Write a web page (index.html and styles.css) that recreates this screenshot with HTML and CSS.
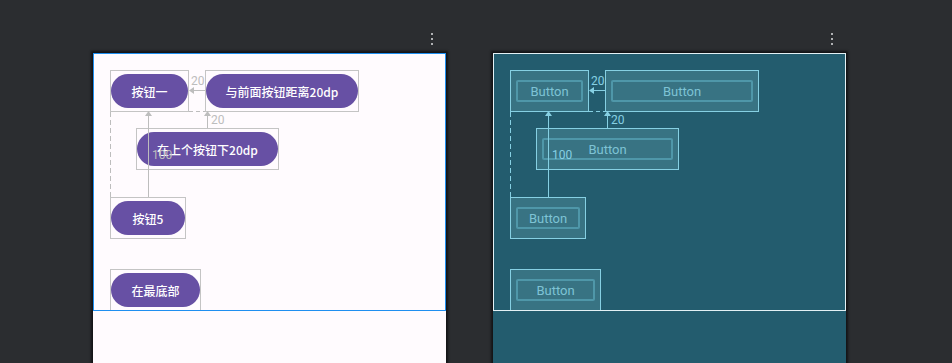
FILE: index.html
```html
<!DOCTYPE html>
<html lang="zh-CN">
<head>
  <meta charset="UTF-8">
  <meta name="viewport" content="width=device-width, initial-scale=1.0">
  <title>Layout Editor</title>
  <link rel="stylesheet" href="styles.css">
</head>
<body>

<div class="editor">

  <!-- design surface -->
  <div class="panel design">
    <div class="panel-bar">
      <div class="kebab"><span></span><span></span><span></span></div>
    </div>
    <div class="device">
      <div class="screen">
        <div class="widget w-first"><div class="pill">按钮一</div></div>
        <div class="widget w-second"><div class="pill">与前面按钮距离20dp</div></div>
        <div class="widget w-third"><div class="pill">在上个按钮下20dp</div></div>
        <div class="widget w-fifth"><div class="pill">按钮5</div></div>
        <div class="widget w-bottom"><div class="pill">在最底部</div></div>

        <svg class="links" width="351" height="256">
          <g class="link-lines">
            <line x1="97" y1="36.5" x2="111" y2="36.5"/>
            <line x1="95" y1="57.5" x2="111" y2="57.5" stroke-dasharray="4 3"/>
            <line x1="16.5" y1="58" x2="16.5" y2="143" stroke-dasharray="5 3"/>
            <line x1="54.5" y1="61" x2="54.5" y2="143"/>
            <line x1="113.5" y1="61" x2="113.5" y2="74"/>
          </g>
          <g class="link-heads">
            <polygon points="95,36.5 100,33 100,40"/>
            <polygon points="54.5,57 51,62 58,62"/>
            <polygon points="113.5,57 110,62 117,62"/>
          </g>
          <text x="97" y="31">20</text>
          <text x="117" y="70">20</text>
          <text x="58" y="105">100</text>
        </svg>
      </div>
    </div>
  </div>

  <!-- blueprint surface -->
  <div class="panel blueprint">
    <div class="panel-bar">
      <div class="kebab"><span></span><span></span><span></span></div>
    </div>
    <div class="device">
      <div class="screen">
        <div class="widget w-first"><div class="bp-btn">Button</div></div>
        <div class="widget w-second"><div class="bp-btn">Button</div></div>
        <div class="widget w-third"><div class="bp-btn">Button</div></div>
        <div class="widget w-fifth"><div class="bp-btn">Button</div></div>
        <div class="widget w-bottom"><div class="bp-btn">Button</div></div>

        <svg class="links" width="351" height="256">
          <g class="link-lines">
            <line x1="97" y1="36.5" x2="111" y2="36.5"/>
            <line x1="95" y1="57.5" x2="111" y2="57.5" stroke-dasharray="4 3"/>
            <line x1="16.5" y1="58" x2="16.5" y2="143" stroke-dasharray="5 3"/>
            <line x1="54.5" y1="61" x2="54.5" y2="143"/>
            <line x1="113.5" y1="61" x2="113.5" y2="74"/>
          </g>
          <g class="link-heads">
            <polygon points="95,36.5 100,33 100,40"/>
            <polygon points="54.5,57 51,62 58,62"/>
            <polygon points="113.5,57 110,62 117,62"/>
          </g>
          <text x="97" y="31">20</text>
          <text x="117" y="70">20</text>
          <text x="58" y="105">100</text>
        </svg>
      </div>
    </div>
  </div>

</div>

</body>
</html>
```

FILE: styles.css
```css
body {
  margin: 0;
  height: 363px;
  overflow: hidden;
  background-color: #2b2d30;
  font-family: "Noto Sans CJK SC", Roboto, sans-serif;
}

.editor {
  display: flex;
  gap: 47px;
  padding-left: 93px;
}

.panel {
  width: 353px;
  display: flex;
  flex-direction: column;
}

.panel-bar {
  height: 53px;
  box-sizing: border-box;
  padding: 33px 13px 0 0;
  display: flex;
  justify-content: flex-end;
}

.kebab {
  display: flex;
  flex-direction: column;
  gap: 3px;
}

.kebab span {
  width: 2px;
  height: 2px;
  background: #afb1b3;
}

.device {
  height: 310px;
  box-shadow: 0 0 2px 2px #141416;
}

.screen {
  position: relative;
  height: 258px;
  box-sizing: border-box;
  overflow: hidden;
}

/* widget boxes on the canvas */
.widget {
  position: absolute;
  height: 42px;
  box-sizing: border-box;
  display: flex;
  align-items: center;
}

.w-first  { left: 16px;  top: 16px;  width: 79px; }
.w-second { left: 111px; top: 16px;  width: 154px; }
.w-third  { left: 42px;  top: 74px;  width: 143px; }
.w-fifth  { left: 16px;  top: 143px; width: 76px; }
.w-bottom { left: 16px;  top: 215px; width: 91px; }

.links {
  position: absolute;
  left: 0;
  top: 0;
}

.links text {
  font-family: Roboto, sans-serif;
  font-size: 12px;
}

.link-lines line {
  stroke-width: 1;
}

/* design view */
.design .device {
  background: #fffbfe;
}

.design .screen {
  border: 1px solid #1f8ff0;
}

.design .widget {
  border: 1px solid #c4c4c4;
}

.pill {
  width: 100%;
  height: 34px;
  border-radius: 17px;
  background: #6750a4;
  color: #ffffff;
  font-size: 12px;
  font-weight: 500;
  display: flex;
  align-items: center;
  justify-content: center;
  white-space: nowrap;
}

.design .link-lines line { stroke: #bdbdbd; }
.design .link-heads { fill: #bdbdbd; }
.design .links text { fill: #bdbdbd; }

/* blueprint view */
.blueprint .device {
  background: #235c6e;
}

.blueprint .screen {
  border: 1px solid #e3f1f5;
}

.blueprint .widget {
  border: 1px solid #86d0e3;
  background: #387383;
}

.bp-btn {
  flex: 1;
  margin: 0 5px;
  height: 22px;
  box-sizing: border-box;
  border: 2px solid #4f97a9;
  border-radius: 2px;
  color: #7ec3d5;
  font-family: Roboto, sans-serif;
  font-size: 13px;
  display: flex;
  align-items: center;
  justify-content: center;
}

.blueprint .link-lines line { stroke: #86d0e3; }
.blueprint .link-heads { fill: #86d0e3; }
.blueprint .links text { fill: #86d0e3; }
```
